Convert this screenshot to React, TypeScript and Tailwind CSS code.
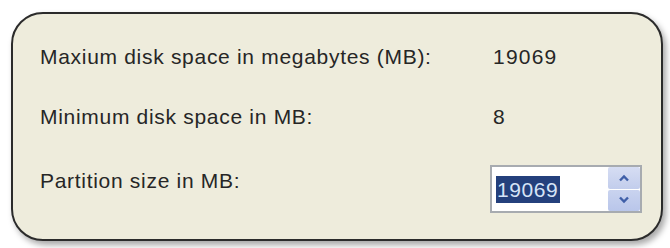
import * as React from 'react';

function SpinBox({ value }: { value: string }) {
  return (
    <div className="flex h-[48px] w-[152px] border-2 border-[#a7abb0] bg-white">
      <div className="flex flex-1 items-center pl-[4px]">
        <span className="bg-[#24407c] pl-[1px] pr-[2px] text-[21px] leading-[27px] tracking-[0.6px] text-[#d6e4f7]">
          {value}
        </span>
      </div>
      <div className="flex w-[32px] flex-col gap-[1px] bg-white">
        <button className="flex flex-1 items-center justify-center rounded-[2px] bg-gradient-to-b from-[#d6ddf3] to-[#c2cdec]">
          <svg width="12" height="8" viewBox="0 0 12 8">
            <path d="M2 6.5 L6 2.5 L10 6.5" fill="none" stroke="#3f5fa8" strokeWidth="2.4" />
          </svg>
        </button>
        <button className="flex flex-1 items-center justify-center rounded-[2px] bg-gradient-to-b from-[#c9d3ef] to-[#b9c6ea]">
          <svg width="12" height="8" viewBox="0 0 12 8">
            <path d="M2 1.5 L6 5.5 L10 1.5" fill="none" stroke="#3f5fa8" strokeWidth="2.4" />
          </svg>
        </button>
      </div>
    </div>
  );
}

export default function App() {
  const rows = [
    { label: 'Maxium disk space in megabytes (MB):', value: '19069', h: 'h-[61px]' },
    { label: 'Minimum disk space in MB:', value: '8', h: 'h-[60px]' },
  ];

  return (
    <div className="h-[248px] w-[670px] bg-white pl-[11px] pt-[12px]" style={{ fontFamily: '"Liberation Sans", Arial, sans-serif' }}>
      <div className="h-[229px] w-[652px] rounded-[32px] border-2 border-[#2b2b2b] bg-[#eeecdc] pl-[27px] pt-[12px] text-[21px] tracking-[0.7px] text-[#262626] shadow-[3px_4px_6px_rgba(0,0,0,0.35)]">
        {rows.map((row) => (
          <div key={row.label} className={`flex items-center ${row.h}`}>
            <span className="w-[453px]">{row.label}</span>
            <span className="tracking-[1.2px]">{row.value}</span>
          </div>
        ))}
        <div className="mt-[18px] flex h-[48px]">
          <span className="w-[450px] pt-[4px] leading-[24px]">Partition size in MB:</span>
          <SpinBox value="19069" />
        </div>
      </div>
    </div>
  );
}
